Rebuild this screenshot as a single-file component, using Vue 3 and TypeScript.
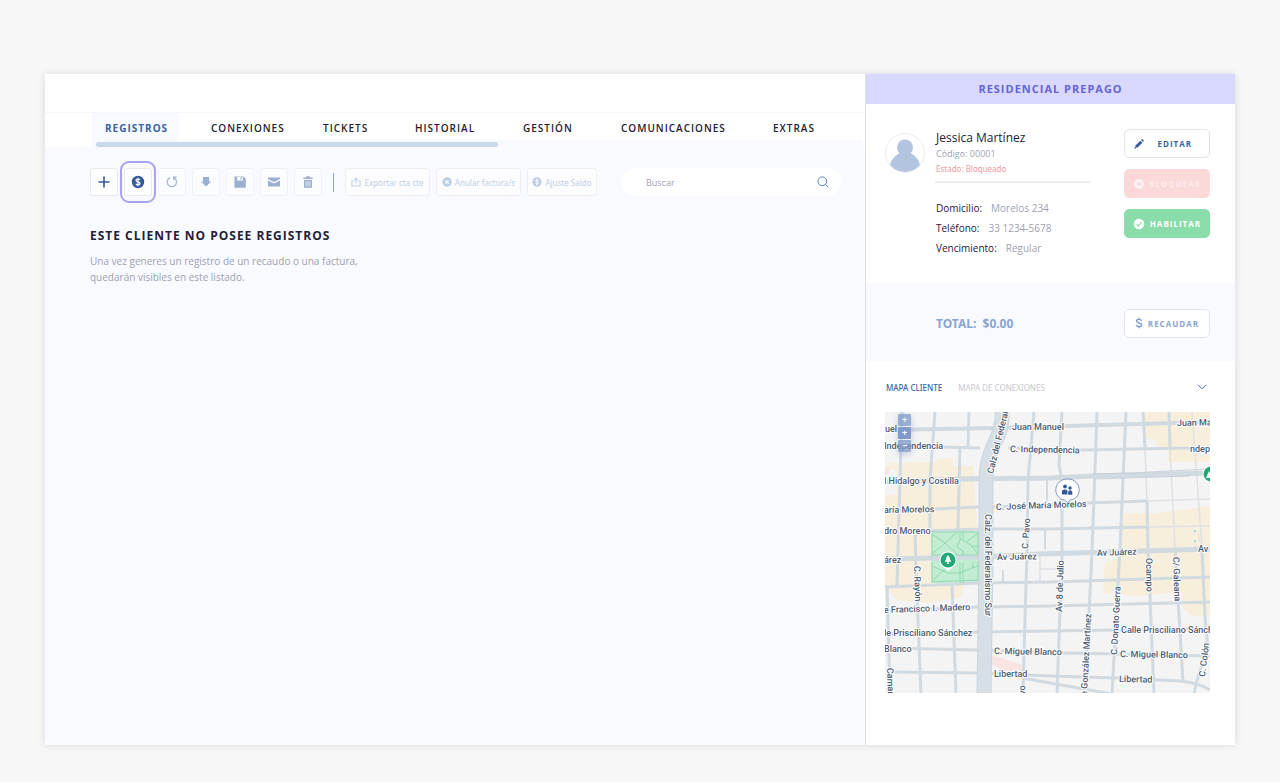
<script setup lang="ts">
import { ref } from 'vue'

interface Tab { id: string; label: string }
interface Road { d: string; w: number }
interface MapLabel { text: string; x: number; y: number; r?: number }

const tabs: Tab[] = [
  { id: 'registros', label: 'REGISTROS' },
  { id: 'conexiones', label: 'CONEXIONES' },
  { id: 'tickets', label: 'TICKETS' },
  { id: 'historial', label: 'HISTORIAL' },
  { id: 'gestion', label: 'GESTIÓN' },
  { id: 'comunicaciones', label: 'COMUNICACIONES' },
  { id: 'extras', label: 'EXTRAS' },
]
const activeTab = ref('registros')
const mapTab = ref('cliente')
const search = ref('')

const details = [
  { label: 'Domicilio:', value: 'Morelos 234' },
  { label: 'Teléfono:', value: '33 1234-5678' },
  { label: 'Vencimiento:', value: 'Regular' },
]

const roads: Road[] = [
  { d: 'M885 430L995 428L1067 426L1210 422', w: 4 },
  { d: 'M885 446L943 447L980 448M1008 448L1082 450L1190 448L1210 447', w: 3 },
  { d: 'M885 482L960 479L1050 478L1093 476L1210 473', w: 5 },
  { d: 'M885 511L980 507M993 507L1087 503L1147 501', w: 3 },
  { d: 'M885 533L930 531L980 529L1050 529L1147 527', w: 3 },
  { d: 'M885 559L930 558L980 557L1040 554L1210 549', w: 5 },
  { d: 'M885 587L980 583L1050 582L1210 577', w: 3 },
  { d: 'M885 611L978 607L1050 606L1210 602', w: 3 },
  { d: 'M885 634L978 632L1050 631L1120 630L1210 628', w: 3 },
  { d: 'M885 648L978 650L1063 653L1118 654L1210 656', w: 3 },
  { d: 'M890 672L978 673L1050 676L1118 678L1180 681Q1200 683 1210 690', w: 3 },
  { d: 'M1023 678L1050 683L1112 694', w: 3 },
  { d: 'M902 412L900 480L898 550L897 585', w: 3 },
  { d: 'M887 585L890 694', w: 3 },
  { d: 'M935 412L930 480L930 530', w: 3 },
  { d: 'M915 530L916 570L921 694', w: 3 },
  { d: 'M969 412L968 447M960 447L958 529', w: 3 },
  { d: 'M952 585L956 694', w: 3 },
  { d: 'M1034 412L1028 480L1027 555L1025 617L1023 694', w: 3 },
  { d: 'M1062 412L1059 465L1062 480L1062 555L1057 694', w: 3 },
  { d: 'M1097 412L1092 552L1085 694', w: 3 },
  { d: 'M1126 412L1120 548L1112 694', w: 3 },
  { d: 'M1143 412L1145 448M1147 501L1148 548L1154 694', w: 3 },
  { d: 'M1169 412L1170 448M1175 548L1183 682', w: 3 },
  { d: 'M1202 550L1205 617L1208 650Q1198 672 1194 694', w: 3 },
  { d: 'M1047 480L1047 505M1045 530L1045 550M1003 570L1003 582', w: 2 },
]

const thinRoads =
  'M1147 501L1210 499M1147 527L1210 526M1145 448L1147 501M1170 448L1175 548M1192 412L1202 548M1040 569L1062 569M1040 556V582'

const mapLabels: MapLabel[] = [
  { text: 'uel', x: 885, y: 432 },
  { text: 'Juan Manuel', x: 1012, y: 430 },
  { text: 'Juan Manuel', x: 1177, y: 426, r: -1 },
  { text: 'Independencia', x: 884, y: 449 },
  { text: 'C. Independencia', x: 1010, y: 452, r: 1 },
  { text: 'ndependencia', x: 1190, y: 452 },
  { text: 'l Hidalgo y Costilla', x: 884, y: 484 },
  { text: 'aría Morelos', x: 884, y: 513, r: -1 },
  { text: 'C. José María Morelos', x: 996, y: 510, r: -2 },
  { text: 'dro Moreno', x: 884, y: 534 },
  { text: 'árez', x: 884, y: 563 },
  { text: 'Av Juárez', x: 997, y: 560, r: -1 },
  { text: 'Av Juárez', x: 1097, y: 556, r: -2 },
  { text: 'Av Juárez', x: 1198, y: 552 },
  { text: 'e Francisco I. Madero', x: 884, y: 613, r: -2 },
  { text: 'le Prisciliano Sánchez', x: 884, y: 636 },
  { text: 'Blanco', x: 884, y: 652 },
  { text: 'Calle Prisciliano Sánchez', x: 1121, y: 633 },
  { text: 'C. Miguel Blanco', x: 994, y: 654, r: 1 },
  { text: 'C. Miguel Blanco', x: 1120, y: 657, r: 1 },
  { text: 'Libertad', x: 994, y: 677 },
  { text: 'Libertad', x: 1119, y: 682, r: 1 },
  { text: 'Calz del Federal', x: 993, y: 474, r: -76 },
  { text: 'Calz. del Federalismo Sur', x: 985, y: 514, r: 90 },
  { text: 'C. Pavo', x: 1028, y: 549, r: -86 },
  { text: 'Av 8 de Julio', x: 1062, y: 612, r: -88 },
  { text: 'e González Martínez', x: 1087, y: 696, r: -87 },
  { text: 'C. Donato Guerra', x: 1117, y: 655, r: -87 },
  { text: 'Ocampo', x: 1146, y: 558, r: 89 },
  { text: 'C/ Galeana', x: 1173, y: 557, r: 88 },
  { text: 'C. Rayón', x: 914, y: 566, r: 88 },
  { text: 'C. Colón', x: 1205, y: 677, r: -83 },
  { text: 'Camarena', x: 887, y: 668, r: 88 },
  { text: 'vo', x: 1025, y: 695, r: -89 },
]
</script>

<template>
  <div class="page">
    <div class="window">
      <main class="records">
        <header class="topbar"></header>
        <div class="tabs-band">
          <nav class="tabs" aria-label="Secciones">
            <div v-for="tab in tabs" :key="tab.id" class="tab-cell">
              <button type="button" class="tab" :class="{ active: activeTab === tab.id }" @click="activeTab = tab.id">
                {{ tab.label }}
              </button>
            </div>
          </nav>
          <div class="track"><div class="thumb"></div></div>
        </div>

        <div class="toolbar">
          <button type="button" class="tool on" aria-label="Agregar">
            <svg width="14" height="14" viewBox="0 0 14 14"><path d="M7 1.5v11M1.5 7h11" stroke="#33599b" stroke-width="1.6" fill="none" /></svg>
          </button>
          <button type="button" class="tool on focused" aria-label="Recaudar saldo">
            <svg width="14" height="14" viewBox="0 0 14 14"><circle cx="7" cy="7" r="6.2" fill="#33599b" /><path d="M9 5.1C8.700 4.300 8 4 7 4 5.900 4 5 4.500 5 5.400 5 7.400 9 6.500 9 8.500 9 9.500 8.100 10 7 10 5.900 10 5.200 9.600 4.900 8.800M7 2.700V11.300" stroke="#fff" stroke-width="1.200" fill="none" /></svg>
          </button>
          <button type="button" class="tool" aria-label="Actualizar">
            <svg width="14" height="14" viewBox="0 0 14 14"><path d="M5 2.600A4.700 4.700 0 1 0 10.200 3.700" stroke="#a5b7d4" stroke-width="1.300" fill="none" /><path d="M8 1.500h4.200L8.300 5.800z" fill="#a5b7d4" /></svg>
          </button>
          <button type="button" class="tool" aria-label="Descargar">
            <svg width="14" height="14" viewBox="0 0 14 14"><path d="M4 2h6v4.500h2L7 11.500 2 6.500h2z" fill="#9bafd0" /></svg>
          </button>
          <button type="button" class="tool" aria-label="Guardar">
            <svg width="14" height="14" viewBox="0 0 14 14"><path d="M1.500 1.500h9l2.300 2.300v9H1.500z" fill="#9bafd0" /><path d="M4.200 2h5.600v3.600H4.200z" fill="#fff" /><path d="M7.500 2.300h1.300v2.500H7.500z" fill="#9bafd0" /></svg>
          </button>
          <button type="button" class="tool" aria-label="Enviar">
            <svg width="14" height="14" viewBox="0 0 14 14"><path d="M1 2.500h12v1.500L7 7 1 4zM1 5.500l6 3 6-3v6H1z" fill="#9bafd0" /></svg>
          </button>
          <button type="button" class="tool" aria-label="Eliminar">
            <svg width="14" height="14" viewBox="0 0 14 14"><path d="M2.300 2.500h2.900V1.300h3.600v1.200h2.900v1.500H2.300zM3 5h8v7.700H3z" fill="#9bafd0" /><path d="M5 6.200v5.300M7 6.200v5.300M9 6.200v5.300" stroke="#fbfcff" stroke-width=".8" /></svg>
          </button>
          <span class="divider"></span>
          <button type="button" class="action">
            <svg width="10" height="10" viewBox="0 0 10 10"><path d="M3 4H.9v5h8.200V4H7M5 6.500V1.200M3.200 2.900L5 1l1.800 1.900" stroke="#c3d2e8" stroke-width="1.100" fill="none" /></svg>
            Exportar cta cte
          </button>
          <button type="button" class="action">
            <svg width="10" height="10" viewBox="0 0 10 10"><circle cx="5" cy="5" r="4.700" fill="#bccde5" /><path d="M3.300 3.300l3.400 3.400M6.700 3.300L3.300 6.700" stroke="#fff" stroke-width="1.200" /></svg>
            Anular factura/s
          </button>
          <button type="button" class="action short">
            <svg width="10" height="10" viewBox="0 0 14 14"><circle cx="7" cy="7" r="6.500" fill="#bccde5" /><path d="M9 5.100C8.700 4.300 8 4 7 4 5.900 4 5 4.500 5 5.400 5 7.400 9 6.500 9 8.500 9 9.500 8.100 10 7 10 5.900 10 5.200 9.600 4.900 8.800M7 2.700V11.300" stroke="#fff" stroke-width="1.200" fill="none" /></svg>
            Ajuste Saldo
          </button>
          <label class="search">
            <input v-model="search" type="text" placeholder="Buscar" aria-label="Buscar" />
            <svg width="12" height="12" viewBox="0 0 12 12"><circle cx="5.300" cy="5.300" r="4.400" stroke="#5f86bd" fill="none" /><path d="M8.500 8.500L11.300 11.300" stroke="#5f86bd" /></svg>
          </label>
        </div>

        <section class="empty">
          <h1>ESTE CLIENTE NO POSEE REGISTROS</h1>
          <p>Una vez generes un registro de un recaudo o una factura,<br />quedarán visibles en este listado.</p>
        </section>
      </main>

      <aside class="client">
        <div class="plan">RESIDENCIAL PREPAGO</div>
        <section class="profile">
          <svg class="avatar" width="40" height="40" viewBox="0 0 40 40">
            <defs><clipPath id="face"><circle cx="20" cy="20" r="19" /></clipPath></defs>
            <circle cx="20" cy="20" r="19.500" fill="#fff" stroke="#ececf0" />
            <g clip-path="url(#face)" fill="#b2c4df"><circle cx="20" cy="14.500" r="8" /><path d="M15 20h10c5 2 10 8 10 13-5 8-25 8-30 0 0-5 5-11 10-13z" /></g>
          </svg>
          <div class="info">
            <div class="identity">
              <h2>Jessica Martínez</h2>
              <p class="code">Código: 00001</p>
              <p class="state">Estado: Bloqueado</p>
            </div>
            <dl>
              <div v-for="item in details" :key="item.label"><dt>{{ item.label }}</dt><dd>{{ item.value }}</dd></div>
            </dl>
          </div>
          <div class="buttons">
            <button type="button" class="btn edit">
              <svg width="12" height="12" viewBox="0 0 12 12"><path d="M1.500 10.700l.7-2.900L7.400 2.700l2 2-5.100 5.100zM8.100 2l.7-.7c.9-.4 2.300.8 1.900 1.900l-.7.800z" fill="#33599b" /><path d="M2.200 8.200L3.900 9.900" stroke="#fff" stroke-width=".6" /></svg>
              <span>EDITAR</span>
            </button>
            <button type="button" class="btn block">
              <svg width="12" height="12" viewBox="0 0 12 12"><circle cx="6" cy="6" r="5" fill="#fdf0f0" /><path d="M4.400 4.400l3.200 3.200M7.600 4.400L4.400 7.600" stroke="#f8d3d3" /></svg>
              <span>BLOQUEAR</span>
            </button>
            <button type="button" class="btn enable">
              <svg width="12" height="12" viewBox="0 0 12 12"><circle cx="6" cy="6" r="5.200" fill="#fff" /><path d="M3.500 6.200l1.800 1.900 3.300-4" stroke="#8adcab" stroke-width="1.200" fill="none" /></svg>
              <span>HABILITAR</span>
            </button>
          </div>
        </section>

        <section class="total">
          <strong>TOTAL:&nbsp; $0.00</strong>
          <button type="button" class="btn collect">
            <svg width="12" height="12" viewBox="0 0 12 12"><path d="M8.600 3.900C8.300 2.800 7.400 2.400 6 2.400 4.500 2.400 3.500 3 3.500 4.100 3.500 6.700 8.700 5.300 8.700 7.900 8.700 9 7.600 9.600 6 9.600 4.500 9.600 3.500 9.100 3.200 8M6 .8v1.800M6 9.400v1.800" stroke="#7f9dcb" stroke-width="1.400" fill="none" /></svg>
            <span>RECAUDAR</span>
          </button>
        </section>

        <section class="map-section">
          <div class="map-tabs">
            <button type="button" :class="{ active: mapTab === 'cliente' }" @click="mapTab = 'cliente'">MAPA CLIENTE</button>
            <button type="button" :class="{ active: mapTab === 'conexiones' }" @click="mapTab = 'conexiones'">MAPA DE CONEXIONES</button>
            <button type="button" class="chevron" aria-label="Contraer mapa">
              <svg width="10" height="6" viewBox="0 0 10 6"><path d="M1 .8l4 4 4-4" stroke="#4a669a" fill="none" /></svg>
            </button>
          </div>
          <div class="map">
            <svg class="map-canvas" viewBox="885 412 325 281" role="img" aria-label="Mapa del cliente">
              <rect x="885" y="412" width="325" height="281" fill="#f4f4f5" />
              <g fill="#f7eedb">
                <path d="M885 468L890 463L933 462L942 458H953V466H973L977 525L975 530L932 531V583L964 585L961 597L930 603L898 600L885 588z" />
                <path d="M1143 412H1210V462L1168 462V450L1158 447L1155 440L1143 438z" />
                <path d="M1123 513L1158 513L1210 506V616H1191L1183 608L1182 592L1137 596L1103 593L1105 562L1118 558z" />
              </g>
              <path d="M885 470h12v25h-12z" fill="#f4f4f5" />
              <path d="M885 467l4 1v6l-4 2zM992 655L1023 665V673L1002 670L992 665z" fill="#fae3e3" />
              <path :d="thinRoads" stroke="#e0e1e5" stroke-width="1.500" fill="none" />
              <rect x="931" y="531" width="48" height="52" fill="#c2edd3" />
              <path v-for="(road, i) in roads" :key="i" :d="road.d" :stroke-width="road.w" stroke="#d1dae1" fill="none" stroke-linejoin="round" />
              <path d="M1093 474L1130 473L1168 471L1210 469M1095 479L1190 476" stroke="#c3c9d8" stroke-width=".8" fill="none" />
              <path d="M1002 410C1004 438 987 446 986 477L986 560L984 694" stroke="#c9d5de" stroke-width="15" fill="none" />
              <path d="M1002 410C1004 438 987 446 986 477L986 560L984 694" stroke="#d6dfe5" stroke-width="13" fill="none" />
              <path d="M932 534L945 543L957 532M945 543L932 554M945 543L958 555M960 532V540L957 547L963 551V555M960 539L966 542L977 534M966 542L972 546H979M972 546L977 553M963 532V540M932 532H978V555H932zM932 562V582L978 580V562M933 580L946 568M932 566L948 573H960L972 568L978 566M960 563V583M963 563V583M973 562V568" stroke="#92d9b1" fill="none" />
              <path d="M1194 530v5M1195 541v4M1198 533l2 10" stroke="#e3e1df" fill="none" />
              <circle cx="1195" cy="531" r=".9" fill="#7bd4e1" /><circle cx="1195" cy="541" r=".9" fill="#7bd4e1" />
              <g class="map-text">
                <text v-for="(l, i) in mapLabels" :key="i" :x="l.x" :y="l.y" :transform="`rotate(${l.r ?? 0} ${l.x} ${l.y})`">{{ l.text }}</text>
              </g>
              <path d="M948 571L941 565H955z" fill="#fff" />
              <circle cx="948" cy="560" r="8.500" fill="#fff" />
              <circle cx="948" cy="560" r="7.500" fill="#22a874" />
              <path d="M948 555l2.400 3.500h-1l2 3.300h-2.700v2.200h-1.400v-2.200h-2.700l2-3.300h-1z" fill="#fff" />
              <circle cx="1211" cy="474" r="8.500" fill="#fff" />
              <circle cx="1211" cy="474" r="7.500" fill="#22a874" />
              <path d="M1206 478l3-7 3 7z" fill="#fff" />
              <path d="M1067.500 502.500L1064.500 500C1052 498 1053 479 1067.500 479S1083 498 1070.500 500z" fill="#fff" stroke="#8196c2" />
              <g fill="#33599b">
                <circle cx="1065" cy="486.500" r="1.900" /><circle cx="1070" cy="488" r="1.700" />
                <path d="M1062 494.500v-3q0-2 2.800-2t2.700 2v3zM1068.200 494.800v-3q.3-1.600 2-1.600t2.100 1.600v3z" />
              </g>
            </svg>
            <div class="zoom">
              <button type="button" aria-label="Centrar">+</button>
              <button type="button" class="strong" aria-label="Acercar">+</button>
              <button type="button" aria-label="Alejar">−</button>
            </div>
          </div>
        </section>
      </aside>
    </div>
  </div>
</template>

<style>
body { margin: 0; background: #f7f7f7; }
</style>

<style scoped>
* { box-sizing: border-box; }
.page {
  min-height: 100vh;
  padding: 74px 45px 37px;
  display: flex;
  font-family: "Open Sans", "Noto Sans", sans-serif;
  color: #232136;
  background: #f7f7f7;
}
button { font: inherit; margin: 0; padding: 0; border: 0; background: none; color: inherit; cursor: pointer; white-space: nowrap; }
h1, h2, p, dl, dd { margin: 0; }
svg { display: block; flex: none; }
.window {
  flex: 1;
  display: grid;
  grid-template-columns: minmax(0, 820fr) minmax(0, 370fr);
  background: #fff;
  box-shadow: 0 0 8px rgba(0, 0, 0, 0.12);
}
.records { background: #f9faff; }
.topbar { height: 39px; background: #fff; border-bottom: 1px solid #f7f7f9; }
.tabs-band { background: #fff; padding: 0 2px 0 47px; }
.tabs { display: grid; grid-template-columns: 106fr 112fr 92fr 108fr 98fr 152fr 103fr; height: 27px; }
.tab-cell { display: flex; }
.tab { padding: 3px 10px 0 13px; font-size: 10px; line-height: 20px; font-weight: 600; letter-spacing: 1px; }
.tab.active { background: #f9faff; color: #3c639f; font-weight: 700; }
.track { height: 7px; background: #f9faff; padding: 2px 4px 0; }
.thumb { width: 402px; max-width: 100%; height: 5px; border-radius: 3px; background: #cbd8ea; }
.toolbar { display: flex; align-items: center; gap: 6px; padding: 21px 24px 0 45px; }
.tool {
  flex: none;
  width: 28px;
  height: 28px;
  display: grid;
  place-items: center;
  background: #fbfcff;
  border: 1px solid #f0f1f5;
  border-radius: 3px;
}
.tool.on { background: #fff; border-color: #e7e9ef; }
.tool.focused { position: relative; }
.tool.focused::after { content: ""; position: absolute; inset: -8px -5px; border: 2px solid #a7a4ee; border-radius: 9px; }
.divider { flex: none; width: 1px; height: 19px; margin: 0 5px; background: #8aa3cc; }
.action {
  flex: none;
  width: 85px;
  height: 28px;
  display: flex;
  align-items: center;
  justify-content: center;
  gap: 3px;
  font-family: "Noto Sans", sans-serif;
  font-size: 8px;
  color: #c0d0e6;
  background: #fcfcff;
  border: 1px solid #eeeff3;
  border-radius: 3px;
}
.action.short { width: 70px; }
.search {
  flex: 1;
  min-width: 0;
  height: 28px;
  margin-left: 19px;
  padding: 0 12px 0 24px;
  display: flex;
  align-items: center;
  border-radius: 14px;
  background: #fff;
}
.search input { flex: 1; min-width: 0; padding: 0; border: 0; outline: 0; background: none; font: inherit; font-size: 9px; color: #232136; }
.search input::placeholder { color: #a2a1b3; opacity: 1; }
.empty { padding: 31px 45px; }
.empty h1 { font-size: 12px; line-height: 18px; font-weight: 700; letter-spacing: 1px; }
.empty p { margin-top: 8px; font-size: 10px; line-height: 16px; color: #a09fb1; }

.client { border-left: 1px solid #dfe0e5; background: #fff; }
.plan { height: 30px; background: #d9d9ff; color: #6464d2; font-size: 11px; line-height: 30px; font-weight: 700; letter-spacing: 1px; text-align: center; }
.profile { display: grid; grid-template-columns: 50px minmax(0, 1fr) 86px; height: 179px; padding: 25px 25px 0 19px; }
.avatar { margin-top: 4px; }
.info { padding-right: 34px; }
.identity { padding: 0 0 5px 1px; border-bottom: 2px solid #ededf0; }
.identity h2 { font-size: 12px; line-height: 17px; font-weight: 400; }
.code { font-size: 9px; line-height: 16px; color: #a09fb1; }
.state { font-family: "Noto Sans", sans-serif; font-size: 8px; line-height: 14px; color: #ef9a9f; }
.info dl { margin-top: 15px; padding-left: 1px; font-size: 10px; line-height: 20px; white-space: nowrap; }
.info dl div { display: flex; gap: 9px; }
.info dd { color: #a09fb1; }
.buttons { display: flex; flex-direction: column; gap: 11px; }
.btn {
  height: 29px;
  width: 86px;
  padding: 0 8px;
  display: flex;
  align-items: center;
  justify-content: space-between;
  font-size: 8px;
  font-weight: 700;
  letter-spacing: 1px;
  border: 1px solid #e2e4ea;
  border-radius: 5px;
  background: #fff;
}
.edit { color: #3c639f; padding-right: 17px; }
.block { background: #fbd9d9; border-color: #fbd9d9; color: #fcebeb; }
.enable { background: #8adcab; border-color: #8adcab; color: #fff; }
.total { display: flex; align-items: center; justify-content: space-between; height: 78px; padding: 2px 25px 0 70px; background: #f9faff; }
.total strong { font-family: "Noto Sans", sans-serif; font-size: 12px; color: #89a5d0; }
.collect { color: #89a5d0; padding-right: 10px; }
.map-section { padding: 15px 25px 20px 19px; }
.map-tabs { display: flex; align-items: center; gap: 16px; height: 22px; padding-left: 1px; font-family: "Noto Sans", sans-serif; font-size: 8px; color: #c8c8cc; }
.map-tabs .active { color: #3c639f; font-weight: 500; }
.chevron { margin-left: auto; padding: 4px 3px; }
.map { position: relative; margin-top: 14px; }
.map-canvas { width: 100%; height: auto; }
.map-text { font-family: Roboto, sans-serif; font-size: 9px; font-weight: 500; fill: #4c5c71; stroke: #fff; stroke-width: 2px; stroke-linejoin: round; paint-order: stroke; }
.zoom { position: absolute; left: 13px; top: 2px; display: grid; gap: 1px; box-shadow: 0 2px 6px rgba(80, 105, 160, 0.3); }
.zoom button { width: 13px; height: 12px; font-size: 9px; line-height: 12px; font-weight: 700; color: #fff; background: rgba(123, 151, 200, 0.75); border-radius: 1px; }
.zoom button.strong { background: #809bc9; }
</style>
